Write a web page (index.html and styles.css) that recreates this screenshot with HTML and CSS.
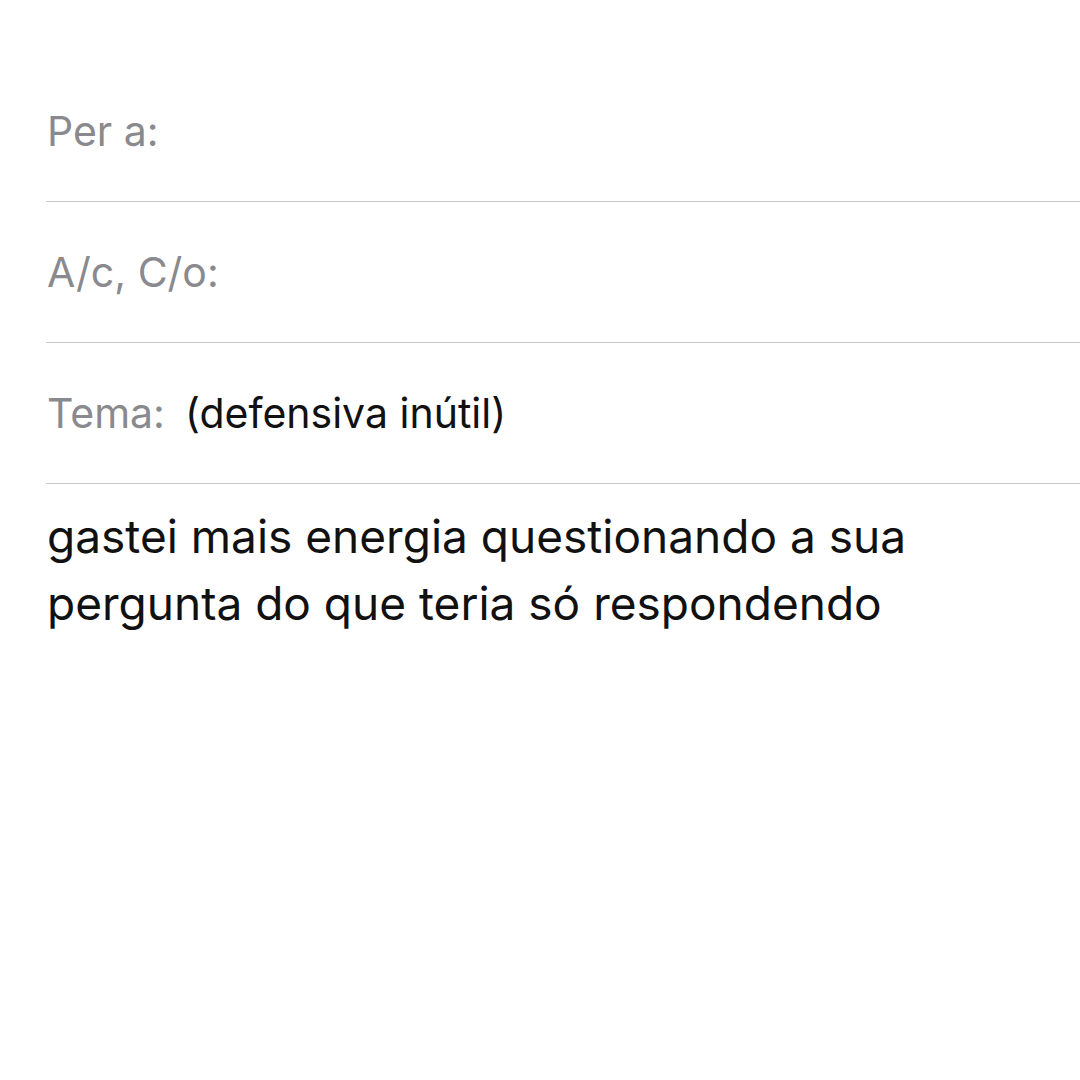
FILE: index.html
```html
<!DOCTYPE html>
<html lang="pt">
<head>
<meta charset="utf-8">
<link rel="stylesheet" href="styles.css">
</head>
<body>
<div class="mail">
  <div class="row"><span class="label">Per a:</span></div>
  <div class="row"><span class="label">A/c, C/o:</span></div>
  <div class="row"><span class="label">Tema:</span><span class="subject">(defensiva inútil)</span></div>
  <div class="body">gastei mais energia questionando a sua<br>pergunta do que teria só respondendo</div>
</div>
</body>
</html>
```

FILE: styles.css
```css
html, body {
  margin: 0;
  padding: 0;
  background: #ffffff;
}
.mail {
  width: 1080px;
  height: 1080px;
  box-sizing: border-box;
  padding: 61px 0 0 46px;
  font-family: Inter, "Noto Sans", sans-serif;
}
.row {
  height: 140px;
  border-bottom: 1px solid #cacacc;
  display: flex;
  align-items: center;
  font-size: 41px;
}
.label {
  color: #8a8a8e;
  padding-left: 1px;
}
.subject {
  color: #111111;
  margin-left: 20px;
}
.body {
  padding-top: 19px;
  padding-left: 1px;
  font-size: 46px;
  line-height: 67px;
  color: #111111;
}
```
